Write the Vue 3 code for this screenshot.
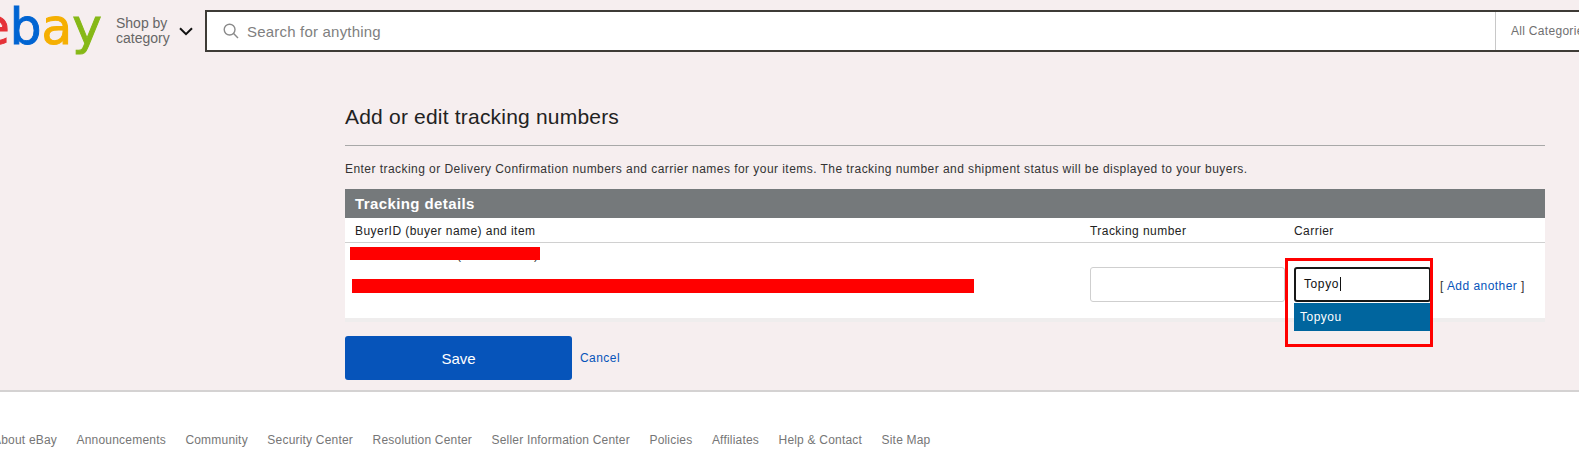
<template>
  <div class="page">
    <div class="top">
      <header class="header">
        <div class="logo"><span class="l-e">e</span><span class="l-b">b</span><span class="l-a">a</span><span class="l-y">y</span></div>
        <button type="button" class="shop-by">
          <span>Shop by<br />category</span>
          <svg width="14" height="9" viewBox="0 0 14 9" fill="none" stroke="#111" stroke-width="2"><path d="M1 1.2 7 7.2 13 1.2" /></svg>
        </button>
        <div class="search">
          <svg class="search-icon" width="16" height="16" viewBox="0 0 16 16" fill="none" stroke="#8a8a8a" stroke-width="1.4"><circle cx="6.6" cy="6.6" r="5.4" /><path d="M10.6 10.6 15 15" /></svg>
          <span class="search-text">Search for anything</span>
          <span class="search-cat">All Categories</span>
        </div>
      </header>

      <main class="main">
        <h1 class="title">Add or edit tracking numbers</h1>
        <p class="desc">Enter tracking or Delivery Confirmation numbers and carrier names for your items. The tracking number and shipment status will be displayed to your buyers.</p>

        <section class="panel">
          <div class="panel-head">Tracking details</div>
          <div class="cols">
            <span class="col-item">BuyerID (buyer name) and item</span>
            <span class="col-track">Tracking number</span>
            <span>Carrier</span>
          </div>
          <div class="row">
            <div class="col-item item-cell">
              <div class="buyer">
                <span class="paren-open">(</span><span class="paren-close">)</span>
                <div class="redact redact-a"></div>
              </div>
              <div class="redact redact-b"></div>
            </div>
            <div class="col-track"><div class="track-input"></div></div>
            <div class="carrier">
              <div class="carrier-input">Topyo<i class="caret"></i></div>
              <div class="menu">
                <div class="menu-item">{{ suggestion }}</div>
              </div>
              <div class="marker"></div>
            </div>
            <div class="add">[ <a>Add another</a> ]</div>
          </div>
        </section>

        <div class="actions">
          <button type="button" class="save">Save</button>
          <a class="cancel">Cancel</a>
        </div>
      </main>
    </div>

    <footer class="footer">
      <a v-for="link in links" :key="link">{{ link }}</a>
    </footer>
  </div>
</template>

<script setup>
const suggestion = 'Topyou'
const links = [
  'About eBay',
  'Announcements',
  'Community',
  'Security Center',
  'Resolution Center',
  'Seller Information Center',
  'Policies',
  'Affiliates',
  'Help & Contact',
  'Site Map',
]
</script>

<style>
html, body { margin: 0; background: #fff; }
</style>

<style scoped>
.page {
  width: 1579px;
  height: 464px;
  overflow: hidden;
  font-family: "Liberation Sans", Arial, sans-serif;
  color: #222;
  background: #fff;
}
.top {
  background: #f6eeef;
  height: 390px;
  border-bottom: 2px solid #d4d2d2;
}
.header {
  display: flex;
  align-items: flex-start;
  height: 42px;
  padding-top: 10px;
  width: 1700px;
}
.logo {
  width: 137px;
  margin-left: -21px;
  margin-top: -13px;
  font-family: "DejaVu Sans", sans-serif;
  font-size: 50px;
  line-height: 60px;
  white-space: nowrap;
  -webkit-text-stroke: 1px;
}
.l-e { color: #e53238; }
.l-b { color: #0064d2; }
.l-a { color: #f5af02; }
.l-y { color: #86b817; }
.shop-by {
  display: flex;
  align-items: center;
  gap: 9px;
  width: 89px;
  height: 42px;
  padding: 0;
  border: 0;
  background: none;
  font: 14px/15px "Liberation Sans", Arial, sans-serif;
  color: #666;
  text-align: left;
  cursor: pointer;
}
.search {
  display: flex;
  align-items: center;
  flex: 1;
  height: 42px;
  box-sizing: border-box;
  border: 2px solid #3e3b36;
  background: #fff;
}
.search-icon { margin-left: 16px; }
.search-text {
  margin-left: 8px;
  flex: 1;
  font-size: 15px;
  letter-spacing: .2px;
  color: #808080;
}
.search-cat {
  align-self: stretch;
  display: flex;
  align-items: center;
  width: 203px;
  padding-left: 15px;
  box-sizing: border-box;
  border-left: 1px solid #c8c8c8;
  font-size: 12px;
  letter-spacing: .3px;
  color: #707070;
}
.main {
  margin: 0 34px 0 345px;
}
.title {
  margin: 51px 0 0;
  padding-bottom: 14px;
  border-bottom: 1px solid #a8a8a8;
  font-size: 21px;
  line-height: 28px;
  letter-spacing: .2px;
  font-weight: 400;
  color: #222;
}
.desc {
  margin: 15px 0 12px;
  font-size: 12px;
  line-height: 16px;
  letter-spacing: .45px;
  color: #333;
}
.panel {
  background: #fff;
  box-shadow: 0 4px 0 #efeded;
}
.panel-head {
  height: 29px;
  padding-left: 10px;
  background: #75797b;
  color: #fff;
  font-size: 15px;
  letter-spacing: .4px;
  font-weight: 700;
  line-height: 29px;
}
.cols {
  display: flex;
  height: 24px;
  border-bottom: 1px solid #d0d0d0;
  font-size: 12px;
  line-height: 27px;
  letter-spacing: .45px;
  color: #222;
}
.cols > span:first-child { padding-left: 10px; box-sizing: border-box; }
.col-item { width: 745px; flex-shrink: 0; }
.col-track { width: 204px; flex-shrink: 0; }
.row {
  display: flex;
  height: 75px;
}
.item-cell { padding-top: 4px; box-sizing: border-box; }
.buyer {
  position: relative;
  height: 17px;
  font-size: 12px;
  line-height: 16px;
  color: #333;
}
.paren-open { margin-left: 112px; }
.paren-close { margin-left: 73px; }
.redact { background: #f00; }
.redact-a {
  position: absolute;
  left: 5px;
  top: 0;
  width: 190px;
  height: 13px;
}
.redact-b { width: 622px; height: 14px; margin: 15px 0 0 7px; }
.col-track { padding-top: 24px; box-sizing: border-box; }
.cols .col-track { padding-top: 0; }
.track-input {
  width: 195px;
  height: 35px;
  box-sizing: border-box;
  border: 1px solid #cfcfcf;
  border-radius: 3px;
  background: #fff;
}
.carrier {
  position: relative;
  width: 137px;
  margin-top: 24px;
  flex-shrink: 0;
}
.carrier-input {
  height: 35px;
  box-sizing: border-box;
  border: 2px solid #181818;
  border-radius: 3px;
  padding-left: 8px;
  font-size: 12px;
  line-height: 31px;
  letter-spacing: .6px;
  color: #111;
  background: #fff;
}
.caret {
  display: inline-block;
  width: 1px;
  height: 14px;
  margin-left: 1px;
  background: #111;
  vertical-align: -3px;
}
.menu {
  position: absolute;
  top: 36px;
  left: 0;
  width: 136px;
  z-index: 2;
}
.menu-item {
  height: 28px;
  padding-left: 6px;
  background: #00659e;
  color: #fff;
  font-size: 12px;
  line-height: 28px;
  letter-spacing: .5px;
}
.marker {
  position: absolute;
  left: -9px;
  top: -9px;
  width: 148px;
  height: 89px;
  box-sizing: border-box;
  border: 3px solid #f00;
  z-index: 3;
}
.add {
  margin: 36px 0 0 9px;
  font-size: 12px;
  letter-spacing: .45px;
  color: #333;
  white-space: nowrap;
}
.add a, .cancel { color: #0654ba; cursor: pointer; }
.actions {
  display: flex;
  align-items: center;
  margin-top: 18px;
}
.save {
  width: 227px;
  height: 44px;
  border: 0;
  border-radius: 3px;
  background: #0654ba;
  color: #fff;
  font: 15px "Liberation Sans", Arial, sans-serif;
  cursor: pointer;
}
.cancel {
  margin-left: 8px;
  font-size: 12px;
  letter-spacing: .45px;
}
.footer {
  display: flex;
  gap: 19.5px;
  margin-left: -7px;
  padding-top: 40px;
  font-size: 12px;
  line-height: 16px;
  letter-spacing: .2px;
  color: #767676;
  white-space: nowrap;
}
</style>
